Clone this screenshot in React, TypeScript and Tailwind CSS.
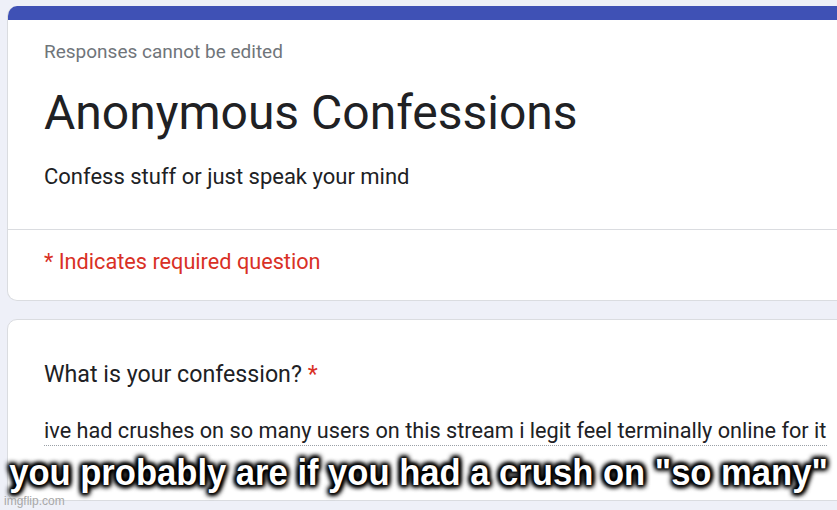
import React from "react";

const roboto = { fontFamily: "Roboto, 'Liberation Sans', sans-serif" };

export default function App() {
  return (
    <div
      className="relative w-[837px] h-[510px] overflow-hidden bg-[#eef0f8]"
      style={roboto}
    >
      <div className="flex flex-col gap-[18px] pt-[6px] pl-[7px] w-[850px]">
        {/* Header card */}
        <div className="rounded-[10px] overflow-hidden bg-white border border-[#dadce0] border-t-0">
          <div className="h-[14px] bg-[#3f51b5]" />
          <div className="px-[36px] pt-[19px] pb-[38px]">
            <p className="text-[19px] text-[#70757a] leading-[26px]">
              Responses cannot be edited
            </p>
            <h1 className="mt-[20px] text-[48px] leading-[56px] text-[#202124]">
              Anonymous Confessions
            </h1>
            <p className="mt-[22px] text-[22px] leading-[28px] text-[#202124]">
              Confess stuff or just speak your mind
            </p>
          </div>
          <div className="border-t border-[#dadce0] px-[36px] pt-[18px] pb-[24px]">
            <p className="text-[21.7px] leading-[28px] text-[#d93025]">
              * Indicates required question
            </p>
          </div>
        </div>

        {/* Question card */}
        <div className="rounded-[10px] bg-white border border-[#dadce0] h-[182px] px-[36px] pt-[39px]">
          <p className="text-[23.2px] leading-[30px] text-[#202124]">
            What is your confession? <span className="text-[#d93025]">*</span>
          </p>
          <p className="mt-[28px] text-[21.7px] leading-[28px] text-[#202124] w-[783px] border-b border-dotted border-[#9aa0a6] whitespace-nowrap">
            ive had crushes on so many users on this stream i legit feel terminally online for it
          </p>
        </div>
      </div>

      {/* Meme caption */}
      <div
        className="absolute left-0 right-0 top-[452px] text-center text-white font-bold text-[34.6px] leading-[44px] whitespace-nowrap scale-y-[1.08] origin-bottom"
        style={{
          fontFamily: "'Liberation Sans', Arial, sans-serif",
          textShadow:
            "0 0 2px #000, 0 0 3px #000, 0 0 4px #000, 0 0 6px #000, 2px 2px 5px #000, -2px -2px 5px #000, 2px -2px 5px #000, -2px 2px 5px #000",
        }}
      >
        you probably are if you had a crush on "so many"
      </div>
      <div
        className="absolute left-[4px] top-[493px] text-[12px] leading-[16px] text-[#a8a8a8]"
        style={{ fontFamily: "'Liberation Sans', Arial, sans-serif" }}
      >
        imgflip.com
      </div>
    </div>
  );
}
